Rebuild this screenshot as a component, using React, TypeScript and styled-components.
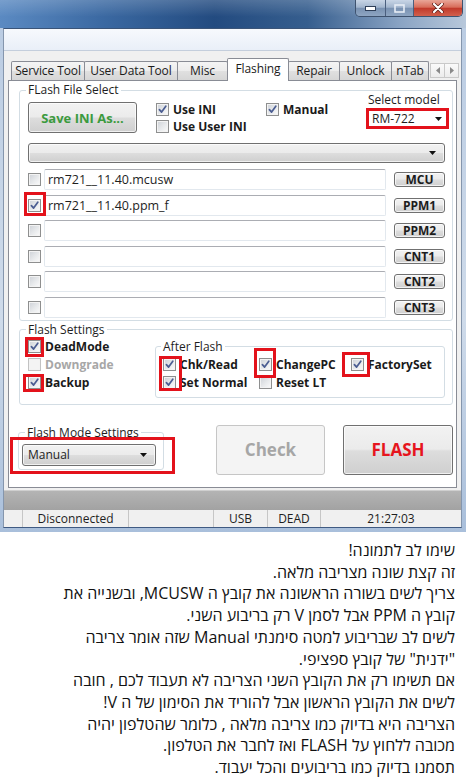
import styled, { createGlobalStyle } from "styled-components";

const UI_FONT = `"Open Sans", "Liberation Sans", sans-serif`;
const POST_FONT = `"Open Sans", "Liberation Sans", "DejaVu Sans", sans-serif`;
const MARK_RED = "#e3121b";

const GlobalStyle = createGlobalStyle`
  html, body {
    margin: 0;
    padding: 0;
    background: #ffffff;
  }
  body {
    width: 466px;
    height: 784px;
    overflow: hidden;
    font-family: ${UI_FONT};
  }
  * {
    box-sizing: border-box;
  }
`;

const Window = styled.div`
  width: 466px;
  background: linear-gradient(180deg, #b9cbe2 0%, #cfdbea 60%, #a9bfdb 100%);
  padding-bottom: 4px;
`;

const TitleBar = styled.div`
  height: 28px;
  display: flex;
  justify-content: flex-end;
  align-items: flex-start;
  padding-right: 3px;
  background-image: linear-gradient(
      180deg,
      rgba(255, 255, 255, 0.18) 0%,
      rgba(255, 255, 255, 0) 60%
    ),
    linear-gradient(
      90deg,
      #5b8ac2 0%,
      #3b69a2 22%,
      #234b80 46%,
      #365e8e 66%,
      #8aa4c4 86%,
      #b8c8db 100%
    );
`;

const CaptionGroup = styled.div`
  display: flex;
  height: 17px;
  border: 1px solid #3e526e;
  border-top: none;
  border-radius: 0 0 5px 5px;
  overflow: hidden;
`;

const CaptionButton = styled.div<{ $kind: "min" | "max" | "close" }>`
  width: ${(p) => (p.$kind === "close" ? 49 : p.$kind === "max" ? 28 : 29)}px;
  height: 100%;
  display: flex;
  align-items: center;
  justify-content: center;
  background: ${(p) =>
    p.$kind === "close"
      ? "linear-gradient(180deg, #e9a698 0%, #d86d5a 45%, #c13a2b 52%, #d2604d 100%)"
      : "linear-gradient(180deg, #c8d5e6 0%, #a3b6ce 45%, #7a92b2 52%, #8ea5c2 100%)"};
  & + & {
    border-left: 1px solid #4b5f7e;
  }
`;

const Client = styled.div`
  margin: 0 4px 0 3px;
  background: #f0f0f0;
  border: 1px solid #8596ad;
  border-top-color: #3a5478;
  border-bottom-color: #3f5a82;
`;

const MenuStrip = styled.div`
  height: 22px;
  background: linear-gradient(180deg, #f7f9fd 0%, #e9eff8 100%);
  border-bottom: 1px solid #c4cedc;
`;

const TabArea = styled.div`
  padding: 7px 4px 2px 4px;
`;

const TabStrip = styled.div`
  display: flex;
  align-items: flex-end;
  height: 22px;
  padding-left: 4px;
`;

const Tab = styled.div<{ $w: number; $active?: boolean }>`
  position: relative;
  z-index: ${(p) => (p.$active ? 2 : 1)};
  flex: none;
  width: ${(p) => p.$w}px;
  height: ${(p) => (p.$active ? 23 : 19)}px;
  margin-left: -1px;
  margin-bottom: ${(p) => (p.$active ? -1 : 0)}px;
  padding-bottom: ${(p) => (p.$active ? 3 : 1)}px;
  display: flex;
  align-items: center;
  justify-content: center;
  border: 1px solid #898c95;
  border-bottom: none;
  border-radius: 2px 2px 0 0;
  background: ${(p) =>
    p.$active
      ? "#ffffff"
      : "linear-gradient(180deg, #f4f4f4 0%, #ececec 50%, #e0e0e0 51%, #d6d6d6 100%)"};
  font-size: 12px;
  letter-spacing: -0.1px;
  color: #1b1b1b;
  white-space: nowrap;
  overflow: hidden;
`;

const TabArrows = styled.div`
  display: flex;
  align-self: flex-start;
  margin-top: 5px;
  margin-left: 1px;
`;

const TabArrow = styled.div`
  width: 15px;
  height: 15px;
  display: flex;
  align-items: center;
  justify-content: center;
  border: 1px solid #c9c9c9;
  background: linear-gradient(180deg, #fafafa, #ececec);
  & + & {
    margin-left: -1px;
  }
`;

const Panel = styled.div`
  height: 408px;
  border: 1px solid #898c95;
  background: #ffffff;
  padding: 3px 3px 0 10px;
`;

const Group = styled.fieldset<{ $mt?: number }>`
  margin: ${(p) => p.$mt ?? 0}px 0 0 0;
  min-width: 0;
  border: 1px solid #d3dde4;
  border-radius: 3px;
  padding: 0 7px 2px 8px;
`;

const Legend = styled.legend`
  margin-left: -2px;
  padding: 0 2px;
  font-size: 12px;
  line-height: 12px;
  color: #1e1e1e;
`;

const TopRow = styled.div`
  display: flex;
  align-items: flex-start;
  height: 39px;
`;

const GradientButton = styled.div<{ $w: number; $h: number }>`
  width: ${(p) => p.$w}px;
  height: ${(p) => p.$h}px;
  flex: none;
  display: flex;
  align-items: center;
  justify-content: center;
  border: 1px solid #707070;
  border-radius: 3px;
  background: linear-gradient(
    180deg,
    #f2f2f2 0%,
    #ebebeb 48%,
    #dddddd 52%,
    #cfcfcf 100%
  );
  box-shadow: inset 0 0 0 1px rgba(255, 255, 255, 0.7);
  font-weight: 700;
  white-space: nowrap;
`;

const SaveButton = styled(GradientButton)`
  margin-top: 6px;
  font-size: 13px;
  color: #3b9a3e;
`;

const CheckCol = styled.div<{ $w?: number; $ml?: number; $mt?: number }>`
  display: flex;
  flex-direction: column;
  flex: none;
  width: ${(p) => (p.$w ? `${p.$w}px` : "auto")};
  margin-left: ${(p) => p.$ml ?? 0}px;
  margin-top: ${(p) => p.$mt ?? 0}px;
`;

const CheckRow = styled.div<{ $h?: number }>`
  display: flex;
  align-items: center;
  gap: 4px;
  height: ${(p) => p.$h ?? 17}px;
  white-space: nowrap;
`;

const CheckLabel = styled.span<{ $disabled?: boolean }>`
  font-size: 12px;
  font-weight: 700;
  color: ${(p) => (p.$disabled ? "#a7a7a7" : "#1a1a1a")};
`;

const Box = styled.span<{ $disabled?: boolean }>`
  flex: none;
  width: 13px;
  height: 13px;
  display: inline-flex;
  align-items: center;
  justify-content: center;
  border: 1px solid ${(p) => (p.$disabled ? "#c2c2c2" : "#8e8f8f")};
  background: ${(p) =>
    p.$disabled
      ? "#f4f4f4"
      : "linear-gradient(135deg, #cdd1d7 0%, #e8eaec 55%, #fbfbfb 100%)"};
  box-shadow: inset 0 0 0 1px #f3f3f3;
`;

const ModelCol = styled.div`
  flex: 1;
  margin-top: -2px;
  display: flex;
  flex-direction: column;
`;

const ModelLabel = styled.span`
  font-size: 12px;
  line-height: 12px;
  padding-left: 2px;
  color: #1e1e1e;
  white-space: nowrap;
`;

const Mark = styled.span<{ $t: number; $r: number; $b: number; $l: number }>`
  position: relative;
  display: inline-flex;
  flex: none;
  &::after {
    content: "";
    position: absolute;
    top: ${(p) => -p.$t}px;
    right: ${(p) => -p.$r}px;
    bottom: ${(p) => -p.$b}px;
    left: ${(p) => -p.$l}px;
    border: 3px solid ${MARK_RED};
    pointer-events: none;
  }
`;

const MarkSpot = styled(Mark)<{ $mt?: number; $ml?: number }>`
  margin-top: ${(p) => p.$mt ?? 0}px;
  margin-left: ${(p) => p.$ml ?? 0}px;
`;

const ModelCombo = styled.div`
  width: 77px;
  height: 15px;
  display: flex;
  align-items: center;
  justify-content: space-between;
  padding: 0 4px 0 3px;
  background: #ffffff;
  font-size: 12px;
  color: #1e1e1e;
`;

const Combo = styled(GradientButton)<{ $mt?: number }>`
  margin-top: ${(p) => p.$mt ?? 0}px;
  justify-content: space-between;
  padding: 0 8px 0 5px;
  font-weight: 400;
  font-size: 12px;
  color: #1e1e1e;
`;

const FileRows = styled.div`
  display: flex;
  flex-direction: column;
  gap: 4.6px;
  margin-top: 6px;
`;

const FileRow = styled.div`
  display: flex;
  align-items: center;
  height: 21px;
`;

const CheckCell = styled.div`
  width: 16px;
  flex: none;
  display: flex;
  align-items: center;
`;

const FileInput = styled.div`
  flex: 1;
  height: 21px;
  display: flex;
  align-items: center;
  padding-left: 3px;
  border: 1px solid #e2e8ee;
  border-top-color: #abadb3;
  border-radius: 2px;
  background: #ffffff;
  font-size: 12.5px;
  color: #1e1e1e;
  white-space: nowrap;
`;

const FileButton = styled(GradientButton)`
  margin-left: 8px;
  font-size: 12px;
  color: #1c1c1c;
`;

const SettingsBody = styled.div`
  display: flex;
  align-items: flex-start;
  padding-bottom: 4px;
`;

const AfterGroup = styled(Group)`
  flex: none;
  width: 290px;
  margin-top: 5px;
  padding: 3px 7px 5px 7px;
`;

const AfterCols = styled.div`
  display: flex;
`;

const BottomRow = styled.div`
  display: flex;
  align-items: flex-start;
`;

const ModeGroup = styled(Group)`
  width: 146px;
  padding: 0 3px 3px 3px;
`;

const ModeLegend = styled(Legend)`
  margin-left: 3px;
`;

const BigButton = styled(GradientButton)<{ $ml: number; $disabled?: boolean }>`
  margin-left: ${(p) => p.$ml}px;
  margin-top: 20px;
  font-size: 17px;
  ${(p) =>
    p.$disabled
      ? `
    border-color: #c6c6c6;
    background: #f4f4f4;
    box-shadow: none;
    color: #a6a6a6;
  `
      : `color: #e6151d;`}
`;

const ProgressBand = styled.div`
  height: 20px;
  background: linear-gradient(180deg, #b4b4b4 0%, #a2a2a2 100%);
  border-top: 1px solid #cfcfcf;
`;

const StatusBar = styled.div`
  display: flex;
  height: 17px;
  background: #f0f0f0;
  font-size: 12px;
  line-height: 17px;
  color: #1e1e1e;
`;

const Pane = styled.div<{ $w?: number }>`
  flex: ${(p) => (p.$w ? "none" : 1)};
  width: ${(p) => (p.$w ? `${p.$w}px` : "auto")};
  text-align: center;
  white-space: nowrap;
  & + & {
    border-left: 1px solid #c6c6c6;
  }
`;

const Post = styled.div`
  direction: rtl;
  padding: 8px 11px 0 0;
  font-family: ${POST_FONT};
  font-size: 16px;
  line-height: 21.7px;
  color: #111111;
`;

const PostLine = styled.div`
  white-space: nowrap;
`;

const TABS = [
  { label: "Service Tool", w: 74 },
  { label: "User Data Tool", w: 94 },
  { label: "Misc", w: 51 },
  { label: "Flashing", w: 62, active: true },
  { label: "Repair", w: 52 },
  { label: "Unlock", w: 53 },
  { label: "nTab", w: 38 },
];

const FILE_ROWS = [
  { file: "rm721__11.40.mcusw", button: "MCU", checked: false },
  { file: "rm721__11.40.ppm_f", button: "PPM1", checked: true, marked: true },
  { file: "", button: "PPM2", checked: false },
  { file: "", button: "CNT1", checked: false },
  { file: "", button: "CNT2", checked: false },
  { file: "", button: "CNT3", checked: false },
];

const POST_LINES = [
  "שימו לב לתמונה!",
  "זה קצת שונה מצריבה מלאה.",
  "צריך לשים בשורה הראשונה את קובץ ה MCUSW, ובשנייה את",
  "קובץ ה PPM אבל לסמן V רק בריבוע השני.",
  "לשים לב שבריבוע למטה סימנתי Manual שזה אומר צריבה",
  "\"ידנית\" של קובץ ספציפי.",
  "אם תשימו רק את הקובץ השני הצריבה לא תעבוד לכם , חובה",
  "לשים את הקובץ הראשון אבל להוריד את הסימון של ה V!",
  "הצריבה היא בדיוק כמו צריבה מלאה , כלומר שהטלפון יהיה",
  "מכובה ללחוץ על FLASH ואז לחבר את הטלפון.",
  "תסמנו בדיוק כמו בריבועים והכל יעבוד.",
];

function Checkbox({ checked, disabled }: { checked?: boolean; disabled?: boolean }) {
  return (
    <Box $disabled={disabled}>
      {checked && (
        <svg width="9" height="9" viewBox="0 0 9 9">
          <path
            d="M1.4 4.6 L3.6 7.1 L7.8 1.2"
            fill="none"
            stroke="#4b5d92"
            strokeWidth="1.7"
            strokeLinecap="round"
            strokeLinejoin="round"
          />
        </svg>
      )}
    </Box>
  );
}

function Arrow() {
  return (
    <svg width="7" height="4" viewBox="0 0 7 4">
      <polygon points="0,0 7,0 3.5,4" fill="#111" />
    </svg>
  );
}

function CheckItem({
  label,
  checked,
  disabled,
  h,
}: {
  label: string;
  checked?: boolean;
  disabled?: boolean;
  h?: number;
}) {
  return (
    <CheckRow $h={h}>
      <Checkbox checked={checked} disabled={disabled} />
      <CheckLabel $disabled={disabled}>{label}</CheckLabel>
    </CheckRow>
  );
}

function MarkedItem({
  label,
  mark,
  h,
}: {
  label: string;
  mark: [number, number, number, number];
  h?: number;
}) {
  return (
    <CheckRow $h={h}>
      <Mark $t={mark[0]} $r={mark[1]} $b={mark[2]} $l={mark[3]}>
        <Checkbox checked />
      </Mark>
      <CheckLabel>{label}</CheckLabel>
    </CheckRow>
  );
}

function CaptionButtons() {
  return (
    <CaptionGroup>
      <CaptionButton $kind="min">
        <svg width="11" height="5" viewBox="0 0 11 5">
          <rect x="0.5" y="0.5" width="10" height="4" fill="#fff" stroke="#2f3f58" />
        </svg>
      </CaptionButton>
      <CaptionButton $kind="max">
        <svg width="11" height="9" viewBox="0 0 11 9">
          <rect x="1" y="1" width="9" height="7" fill="none" stroke="#e6edf6" strokeWidth="1.6" />
        </svg>
      </CaptionButton>
      <CaptionButton $kind="close">
        <svg width="12" height="10" viewBox="0 0 12 10">
          <path d="M2 1 L10 9 M10 1 L2 9" stroke="#5c1e18" strokeWidth="3.6" strokeLinecap="round" />
          <path d="M2 1 L10 9 M10 1 L2 9" stroke="#ffffff" strokeWidth="2.2" strokeLinecap="round" />
        </svg>
      </CaptionButton>
    </CaptionGroup>
  );
}

export default function App() {
  return (
    <>
      <GlobalStyle />
      <Window>
        <TitleBar>
          <CaptionButtons />
        </TitleBar>
        <Client>
          <MenuStrip />
          <TabArea>
            <TabStrip>
              {TABS.map((t) => (
                <Tab key={t.label} $w={t.w} $active={t.active}>
                  {t.label}
                </Tab>
              ))}
              <TabArrows>
                <TabArrow>
                  <svg width="4" height="7" viewBox="0 0 4 7">
                    <polygon points="4,0 4,7 0,3.5" fill="#8a8a8a" />
                  </svg>
                </TabArrow>
                <TabArrow>
                  <svg width="4" height="7" viewBox="0 0 4 7">
                    <polygon points="0,0 0,7 4,3.5" fill="#8a8a8a" />
                  </svg>
                </TabArrow>
              </TabArrows>
            </TabStrip>
            <Panel>
              <Group>
                <Legend>FLash File Select</Legend>
                <TopRow>
                  <SaveButton $w={109} $h={31}>
                    Save INI As...
                  </SaveButton>
                  <CheckCol $w={110} $ml={19} $mt={5}>
                    <CheckItem label="Use INI" checked />
                    <CheckItem label="Use User INI" />
                  </CheckCol>
                  <CheckCol $w={100} $mt={5}>
                    <CheckItem label="Manual" checked />
                  </CheckCol>
                  <ModelCol>
                    <ModelLabel>Select model</ModelLabel>
                    <MarkSpot $t={3} $r={3} $b={3} $l={3} $mt={5} $ml={3}>
                      <ModelCombo>
                        RM-722
                        <Arrow />
                      </ModelCombo>
                    </MarkSpot>
                  </ModelCol>
                </TopRow>
                <Combo $w={417} $h={20} $mt={8}>
                  <span />
                  <Arrow />
                </Combo>
                <FileRows>
                  {FILE_ROWS.map((r) => (
                    <FileRow key={r.button}>
                      <CheckCell>
                        {r.marked ? (
                          <Mark $t={6.5} $r={5} $b={4.5} $l={4}>
                            <Checkbox checked={r.checked} />
                          </Mark>
                        ) : (
                          <Checkbox checked={r.checked} />
                        )}
                      </CheckCell>
                      <FileInput>{r.file}</FileInput>
                      <FileButton $w={51} $h={15}>
                        {r.button}
                      </FileButton>
                    </FileRow>
                  ))}
                </FileRows>
              </Group>

              <Group $mt={3}>
                <Legend>Flash Settings</Legend>
                <SettingsBody>
                  <CheckCol $w={127} $mt={2}>
                    <MarkedItem label="DeadMode" mark={[3.5, 3, 3.5, 3]} h={18} />
                    <CheckItem label="Downgrade" disabled h={18} />
                    <MarkedItem label="Backup" mark={[2.5, 3, 2.5, 5]} h={18} />
                  </CheckCol>
                  <AfterGroup>
                    <Legend>After Flash</Legend>
                    <AfterCols>
                      <CheckCol $w={96}>
                        <MarkedItem label="Chk/Read" mark={[2.5, 6, 19.5, 4]} h={18} />
                        <CheckItem label="Set Normal" checked h={18} />
                      </CheckCol>
                      <CheckCol $w={92}>
                        <MarkedItem label="ChangePC" mark={[10.5, 4, 6.5, 5]} h={18} />
                        <CheckItem label="Reset LT" h={18} />
                      </CheckCol>
                      <CheckCol>
                        <MarkedItem label="FactorySet" mark={[6.5, 6, 5.5, 9]} h={18} />
                      </CheckCol>
                    </AfterCols>
                  </AfterGroup>
                </SettingsBody>
              </Group>

              <BottomRow>
                <MarkSpot $t={-10} $r={11} $b={4} $l={8} $mt={22} $ml={-1}>
                  <ModeGroup>
                    <ModeLegend>Flash Mode Settings</ModeLegend>
                    <Combo $w={134} $h={22} $mt={5}>
                      Manual
                      <Arrow />
                    </Combo>
                  </ModeGroup>
                </MarkSpot>
                <BigButton $w={109} $h={50} $ml={52} $disabled>
                  Check
                </BigButton>
                <BigButton $w={110} $h={50} $ml={18}>
                  FLASH
                </BigButton>
              </BottomRow>
            </Panel>
          </TabArea>
          <ProgressBand />
          <StatusBar>
            <Pane $w={18} />
            <Pane $w={106}>Disconnected</Pane>
            <Pane $w={85} />
            <Pane $w={54}>USB</Pane>
            <Pane $w={53}>DEAD</Pane>
            <Pane>21:27:03</Pane>
          </StatusBar>
        </Client>
      </Window>
      <Post>
        {POST_LINES.map((line) => (
          <PostLine key={line}>{line}</PostLine>
        ))}
      </Post>
    </>
  );
}
